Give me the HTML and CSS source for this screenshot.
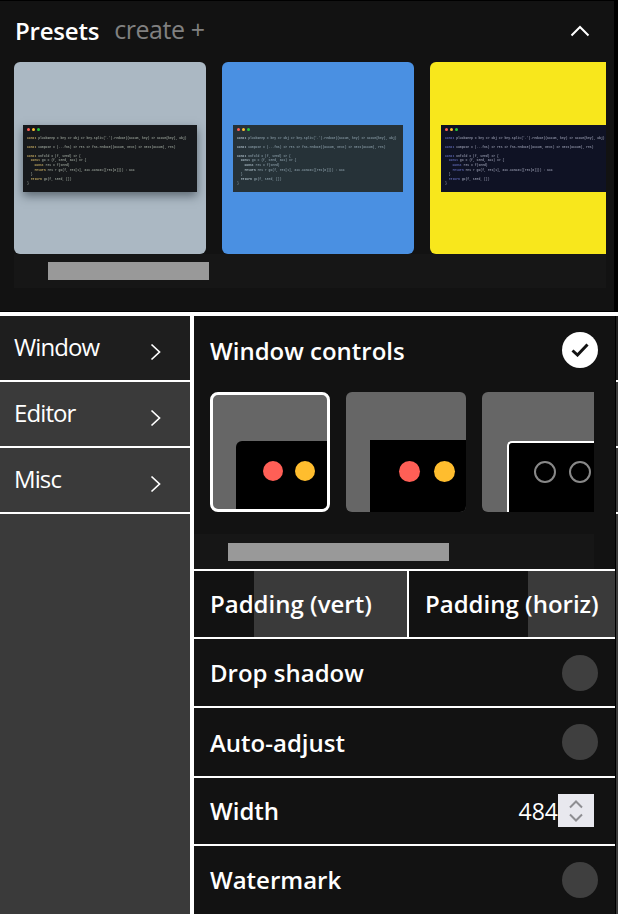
FILE: index.html
```html
<!DOCTYPE html>
<html lang="en">

<head>
    <meta charset="utf-8">
    <title>Settings</title>
    <link rel="stylesheet" href="styles.css">
</head>

<body>
    <div class="presets">
        <div class="presets-head">
            <h2>Presets</h2>
            <span class="create">create +</span>
            <svg class="collapse" width="20" height="12" viewBox="0 0 20 12"><path d="M1.5 10.5 10 2l8.5 8.5" fill="none" stroke="#fff" stroke-width="2"/></svg>
        </div>
        <div class="preset-list">
            <div class="preset preset-grey">
                <div class="code code-shadow">
                    <div class="dots"><i class="red"></i><i class="amber"></i><i class="green"></i></div>
<pre><b>const</b> pluckDeep = key => obj => key.split('.').reduce((accum, key) => accum[key], obj)

<b>const</b> compose = (...fns) => res => fns.reduce((accum, next) => next(accum), res)

<b>const</b> unfold = (f, seed) => {
  <b>const</b> go = (f, seed, acc) => {
    <b>const</b> res = f(seed)
    <b>return</b> res ? go(f, res[1], acc.concat([res[0]])) : acc
  }
  <b>return</b> go(f, seed, [])
}</pre>
                </div>
            </div>
            <div class="preset preset-blue">
                <div class="code code-slate">
                    <div class="dots"><i class="red"></i><i class="amber"></i><i class="green"></i></div>
<pre><b>const</b> pluckDeep = key => obj => key.split('.').reduce((accum, key) => accum[key], obj)

<b>const</b> compose = (...fns) => res => fns.reduce((accum, next) => next(accum), res)

<b>const</b> unfold = (f, seed) => {
  <b>const</b> go = (f, seed, acc) => {
    <b>const</b> res = f(seed)
    <b>return</b> res ? go(f, res[1], acc.concat([res[0]])) : acc
  }
  <b>return</b> go(f, seed, [])
}</pre>
                </div>
            </div>
            <div class="preset preset-yellow">
                <div class="code code-navy">
                    <div class="dots"><i class="red"></i><i class="amber"></i><i class="green"></i></div>
<pre><b>const</b> pluckDeep = key => obj => key.split('.').reduce((accum, key) => accum[key], obj)

<b>const</b> compose = (...fns) => res => fns.reduce((accum, next) => next(accum), res)

<b>const</b> unfold = (f, seed) => {
  <b>const</b> go = (f, seed, acc) => {
    <b>const</b> res = f(seed)
    <b>return</b> res ? go(f, res[1], acc.concat([res[0]])) : acc
  }
  <b>return</b> go(f, seed, [])
}</pre>
                </div>
            </div>
        </div>
        <div class="track track-presets"><div class="thumb"></div></div>
    </div>

    <div class="settings">
        <div class="nav">
            <div class="nav-item nav-active">Window
                <svg width="12" height="18" viewBox="0 0 12 18"><path d="M1.5 1.5 9.5 9l-8 7.500" fill="none" stroke="#fff" stroke-width="1.700"/></svg>
            </div>
            <div class="nav-item">Editor
                <svg width="12" height="18" viewBox="0 0 12 18"><path d="M1.5 1.5 9.5 9l-8 7.500" fill="none" stroke="#fff" stroke-width="1.700"/></svg>
            </div>
            <div class="nav-item">Misc
                <svg width="12" height="18" viewBox="0 0 12 18"><path d="M1.5 1.5 9.5 9l-8 7.500" fill="none" stroke="#fff" stroke-width="1.700"/></svg>
            </div>
        </div>

        <div class="panel">
            <div class="controls">
                <div class="controls-head">
                    <span>Window controls</span>
                    <span class="check">
                        <svg width="18" height="14" viewBox="0 0 18 14"><path d="M1.500 7.500 6.500 12 16.500 1.500" fill="none" stroke="#121212" stroke-width="3"/></svg>
                    </span>
                </div>
                <div class="theme-list">
                    <div class="theme theme-selected">
                        <div class="theme-win win-rounded"><i class="red"></i><i class="amber"></i></div>
                    </div>
                    <div class="theme">
                        <div class="theme-win win-square"><i class="red"></i><i class="amber"></i></div>
                    </div>
                    <div class="theme theme-clipped">
                        <div class="theme-win win-outline"><i></i><i></i></div>
                    </div>
                </div>
                <div class="track track-themes"><div class="thumb"></div></div>
            </div>

            <div class="row row-split">
                <div class="slider slider-vert">Padding (vert)</div>
                <div class="slider slider-horiz">Padding (horiz)</div>
            </div>
            <div class="row">Drop shadow <span class="toggle"></span></div>
            <div class="row row-tall">Auto-adjust <span class="toggle"></span></div>
            <div class="row row-width">Width
                <div class="number">484
                    <span class="spinner">
                        <svg width="16" height="26" viewBox="0 0 16 26"><path d="M2 9.500 8 3.500l6 6M2 16.500l6 6 6-6" fill="none" stroke="#8e8e92" stroke-width="2"/></svg>
                    </span>
                </div>
            </div>
            <div class="row">Watermark <span class="toggle"></span></div>
        </div>

        <div class="edge">
            <div class="edge-item edge-active"></div>
            <div class="edge-item"></div>
            <div class="edge-item"></div>
        </div>
    </div>
</body>

</html>
```

FILE: styles.css
```css
html,
body {
    margin: 0;
    height: 914px;
    overflow: hidden;
}

body {
    background-color: #000;
    color: #fff;
    font-family: 'Open Sans', sans-serif;
}

.presets {
    box-sizing: border-box;
    width: 615px;
    height: 310px;
    margin-top: 1px;
    background-color: #121212;
    border-right: 1px solid #000;
}

.presets-head {
    display: flex;
    align-items: center;
    height: 61px;
    padding: 0 24px 0 15px;
}

h2 {
    margin: -3px 0 0;
    font-size: 24px;
    font-weight: 600;
    letter-spacing: -0.2px;
}

.create {
    margin-left: 15px;
    margin-top: -6px;
    font-size: 25px;
    letter-spacing: -0.45px;
    color: #808080;
}

.collapse {
    margin-left: auto;
    margin-top: -2px;
}

.preset-list {
    display: flex;
    gap: 16px;
    width: 592px;
    margin-left: 14px;
    overflow: hidden;
}

.preset {
    flex: none;
    display: flex;
    align-items: center;
    width: 192px;
    height: 192px;
    border-radius: 6px;
}

.preset-grey {
    background-color: #abb8c3;
}

.preset-blue {
    background-color: #4a90e2;
}

.preset-yellow {
    background-color: #f8e71c;
}

.code {
    flex: none;
    box-sizing: border-box;
    width: 174px;
    height: 67px;
    margin-left: 9px;
    padding: 3px 4px;
    overflow: hidden;
    background-color: #17191c;
    color: #8f978f;
}

.code-shadow {
    box-shadow: 0 4px 9px rgba(30, 40, 50, 0.55);
}

.code-slate {
    width: 170px;
    margin-left: 11px;
    background-color: #263238;
    color: #7f919b;
}

.code-navy {
    margin-left: 11px;
    background-color: #0f1224;
    color: #8a8ea2;
}

.code pre {
    margin: 5px 0 0;
    font-family: 'Liberation Mono', monospace;
    font-size: 3.1px;
    line-height: 4.6px;
    font-weight: 700;
    filter: blur(0.35px);
}

.code pre b {
    color: #c2a860;
}

.code-slate pre b {
    color: #a9bac4;
}

.code-navy pre b {
    color: #5f68b4;
}

.dots {
    display: flex;
    gap: 2px;
}

.dots i {
    width: 3px;
    height: 3px;
    border-radius: 50%;
}

.red {
    background-color: #ff5f56;
}

.amber {
    background-color: #ffbd2e;
}

.green {
    background-color: #27c93f;
}

.track {
    height: 18px;
    background-color: #161616;
}

.track-presets {
    width: 558px;
    margin-left: 14px;
    padding: 8px 0 8px 34px;
}

.track-presets .thumb {
    width: 161px;
}

.track-themes {
    width: 366px;
    margin: 22px 0 0 0;
    padding: 9px 0 8px 34px;
}

.track-themes .thumb {
    width: 221px;
}

.thumb {
    height: 18px;
    background-color: #999;
}

.settings {
    display: flex;
    height: 600px;
    margin-top: 1px;
    border-top: 4px solid #fff;
}

.nav {
    flex: none;
    width: 190px;
    background-color: #3a3a3a;
    border-right: 4px solid #fff;
}

.nav-item {
    display: flex;
    justify-content: space-between;
    align-items: center;
    box-sizing: border-box;
    height: 66px;
    padding: 0 28px 4px 14px;
    font-size: 24px;
    letter-spacing: -0.9px;
    border-bottom: 2px solid #fff;
}

.nav-item svg {
    margin-top: 12px;
}

.nav-active {
    background-color: #1e1e1e;
}

.panel {
    flex: none;
    box-sizing: border-box;
    width: 422px;
    background-color: #121212;
    border-right: 1px solid #000;
}

.controls {
    height: 253px;
    overflow: hidden;
}

.controls-head {
    display: flex;
    justify-content: space-between;
    align-items: center;
    height: 76px;
    padding: 0 17px 8px 16px;
    box-sizing: border-box;
    font-size: 24px;
    font-weight: 600;
}

.check {
    display: flex;
    justify-content: center;
    align-items: center;
    width: 36px;
    height: 36px;
    border-radius: 50%;
    background-color: #fff;
}

.theme-list {
    display: flex;
    gap: 16px;
    width: 384px;
    margin-left: 16px;
    overflow: hidden;
}

.theme {
    flex: none;
    position: relative;
    width: 120px;
    height: 120px;
    border-radius: 6px;
    background-color: #666;
    overflow: hidden;
}

.theme-selected {
    box-sizing: border-box;
    border: 3px solid #fff;
    border-radius: 8px;
}

.theme-win {
    position: absolute;
    left: 24px;
    top: 48px;
    right: 0;
    bottom: 0;
    display: flex;
    align-items: flex-start;
    gap: 12px;
    padding-top: 21px;
    background-color: #000;
}

.theme-win i {
    flex: none;
    border-radius: 50%;
}

.win-rounded {
    left: 23px;
    top: 46px;
    padding-top: 20px;
    border-radius: 6px 0 0 0;
    padding-left: 27px;
}

.win-rounded i {
    width: 20px;
    height: 20px;
}

.win-square {
    padding-left: 29px;
}

.win-square i {
    width: 21px;
    height: 21px;
    margin-right: 2px;
}

.win-outline {
    box-sizing: border-box;
    top: 49px;
    border: 2px solid #fff;
    border-right: 0;
    border-bottom: 0;
    border-radius: 5px 0 0 0;
    left: 25px;
    width: 120px;
    right: auto;
    padding-left: 25px;
    padding-top: 18px;
    gap: 13px;
}

.win-outline i {
    box-sizing: border-box;
    width: 22px;
    height: 22px;
    border: 2px solid #888;
}

.row {
    display: flex;
    justify-content: space-between;
    align-items: center;
    box-sizing: border-box;
    height: 69px;
    padding: 0 17px 0 16px;
    font-size: 24px;
    font-weight: 600;
    border-top: 2px solid #fff;
}

.row-split {
    height: 68px;
    padding: 0;
}

.row-tall {
    height: 70px;
}

.slider {
    display: flex;
    align-items: center;
    box-sizing: border-box;
    height: 66px;
    padding: 0 0 1px 16px;
    white-space: nowrap;
}

.slider-vert {
    width: 215px;
    border-right: 2px solid #fff;
    background: linear-gradient(to right, #121212 60px, #3a3a3a 60px);
}

.slider-horiz {
    flex: 1;
    background: linear-gradient(to right, #121212 119px, #3a3a3a 119px);
}

.row-width {
    height: 68px;
    padding-bottom: 1px;
}

.toggle {
    width: 36px;
    height: 36px;
    border-radius: 50%;
    background-color: #3f3f3f;
}

.number {
    display: flex;
    align-items: center;
    margin-right: 4px;
    font-size: 23px;
    font-weight: 400;
}

.spinner {
    display: flex;
    justify-content: center;
    align-items: center;
    width: 36px;
    height: 33px;
    background-color: #e8e8ee;
}

.edge {
    flex: 1;
    background-color: #3a3a3a;
}

.edge-item {
    box-sizing: border-box;
    height: 66px;
    border-bottom: 2px solid #fff;
}

.edge-active {
    background-color: #1e1e1e;
}
```
